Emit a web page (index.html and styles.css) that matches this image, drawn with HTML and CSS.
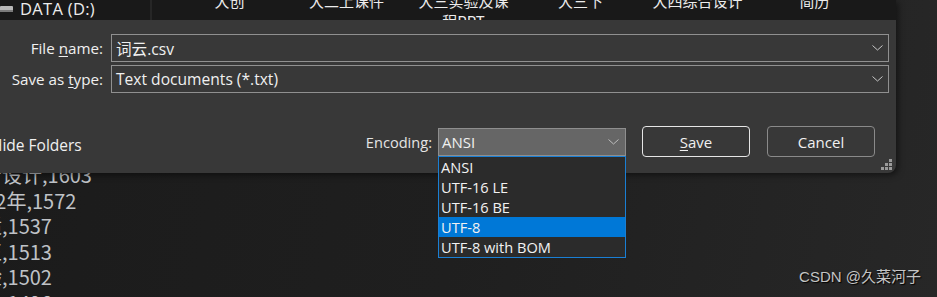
FILE: index.html
```html
<!DOCTYPE html>
<html lang="en">
<head>
    <meta charset="UTF-8">
    <title>Save As</title>
    <link rel="stylesheet" href="styles.css">
</head>
<body>
    <!-- Editor behind the dialog -->
    <div class="editor">
        <div class="line">综合设计,1603</div>
        <div class="line">2022年,1572</div>
        <div class="line">合适,1537</div>
        <div class="line">修正,1513</div>
        <div class="line">体验,1502</div>
        <div class="line">项目,1496</div>
    </div>

    <div class="watermark">CSDN @久菜河子</div>

    <!-- Save As dialog -->
    <div class="dialog">
        <div class="browser">
            <div class="nav">
                <svg class="drive" width="14" height="8" viewBox="0 0 14 8">
                    <rect x="0" y="1" width="13" height="6" rx="1" fill="#b8b8b8"/>
                    <rect x="0" y="5" width="13" height="2" fill="#7a7a7a"/>
                </svg>
                <span>DATA (D:)</span>
            </div>
            <div class="files">
                <div class="file">大创</div>
                <div class="file">大二上课件</div>
                <div class="file">大三实验及课程PPT</div>
                <div class="file">大三下</div>
                <div class="file">大四综合设计</div>
                <div class="file">简历</div>
            </div>
        </div>

        <div class="fields">
            <div class="field-row">
                <label class="field-label">File <u>n</u>ame:</label>
                <div class="combo">
                    <span>词云.csv</span>
                    <svg class="chevron" width="11" height="6" viewBox="0 0 11 6"><polyline points="0.5,0.5 5.5,5 10.5,0.5" fill="none" stroke="#c8c8c8" stroke-width="1"/></svg>
                </div>
            </div>
            <div class="field-row">
                <label class="field-label">Save as <u>t</u>ype:</label>
                <div class="combo">
                    <span>Text documents (*.txt)</span>
                    <svg class="chevron" width="11" height="6" viewBox="0 0 11 6"><polyline points="0.5,0.5 5.5,5 10.5,0.5" fill="none" stroke="#c8c8c8" stroke-width="1"/></svg>
                </div>
            </div>
        </div>

        <div class="footer">
            <div class="hide-folders">Hide Folders</div>
            <div class="encoding">
                <span class="encoding-label">Encoding:</span>
                <div class="select-wrap">
                    <div class="select">
                        <span>ANSI</span>
                        <svg class="chevron" width="11" height="6" viewBox="0 0 11 6"><polyline points="0.5,0.5 5.5,5 10.5,0.5" fill="none" stroke="#bdbdbd" stroke-width="1"/></svg>
                    </div>
                    <ul class="options">
                        <li>ANSI</li>
                        <li>UTF-16 LE</li>
                        <li>UTF-16 BE</li>
                        <li class="selected">UTF-8</li>
                        <li>UTF-8 with BOM</li>
                    </ul>
                </div>
            </div>
            <button class="btn btn-default"><u>S</u>ave</button>
            <button class="btn">Cancel</button>
        </div>

        <svg class="grip" width="12" height="12" viewBox="0 0 12 12">
            <rect x="8" y="0" width="3" height="3" fill="#9a9a9a"/>
            <rect x="4" y="4" width="3" height="3" fill="#9a9a9a"/>
            <rect x="8" y="4" width="3" height="3" fill="#9a9a9a"/>
            <rect x="0" y="8" width="3" height="3" fill="#9a9a9a"/>
            <rect x="4" y="8" width="3" height="3" fill="#9a9a9a"/>
            <rect x="8" y="8" width="3" height="3" fill="#9a9a9a"/>
        </svg>
    </div>
</body>
</html>
```

FILE: styles.css
```css
* {
    box-sizing: border-box;
    margin: 0;
    padding: 0;
}

body {
    width: 937px;
    height: 297px;
    overflow: hidden;
    position: relative;
    font-family: 'Open Sans', 'Noto Sans CJK SC', sans-serif;
    font-size: 15px;
    color: #f0f0f0;
    background: linear-gradient(100deg, #1b1b1b 0%, #1f1f1f 50%, #272727 100%);
}

/* editor text behind the dialog */
.editor {
    height: 297px;
    overflow: hidden;
    padding-top: 162px;
    margin-left: -38px;
    font-family: 'Noto Sans CJK SC', sans-serif;
    font-size: 20px;
    line-height: 25.6px;
    color: #bfc2c6;
}

.watermark {
    position: absolute;
    right: 16px;
    bottom: 11px;
    font-family: 'Liberation Sans', 'Noto Sans CJK SC', sans-serif;
    font-size: 15px;
    color: #c4c4c4;
    text-shadow: 1px 1px 1px #000;
}

/* dialog */
.dialog {
    position: absolute;
    top: 0;
    left: 0;
    width: 896px;
    height: 173px;
    background-color: #383838;
    border-bottom-right-radius: 8px;
    box-shadow: 2px 2px 6px rgba(0, 0, 0, 0.5);
}

.browser {
    display: flex;
    height: 20px;
    background-color: #191919;
    overflow: hidden;
}

.nav {
    width: 152px;
    display: flex;
    align-items: center;
    gap: 6px;
    padding-bottom: 3px;
    border-right: 2px solid #262626;
    font-size: 16.5px;
    letter-spacing: 0.3px;
    color: #ececec;
}

.drive {
    flex: none;
}

.files {
    display: flex;
    padding-left: 19px;
    margin-top: -9px;
}

.file {
    width: 117px;
    padding: 0 8px;
    font-family: 'Noto Sans CJK SC', sans-serif;
    font-size: 15px;
    line-height: 20px;
    text-align: center;
    color: #ececec;
}

.fields {
    display: flex;
    flex-direction: column;
    gap: 3px;
    padding: 14px 7px 0 0;
}

.field-row {
    display: flex;
    align-items: center;
    gap: 8px;
}

.field-label {
    width: 103px;
    text-align: right;
    font-size: 15.2px;
}

.field-label u,
.btn u {
    text-underline-offset: 2px;
}

.combo {
    flex: 1;
    height: 28px;
    display: flex;
    align-items: center;
    justify-content: space-between;
    padding: 0 5px 0 4px;
    border: 1px solid #909090;
    font-size: 15.6px;
}

.footer {
    display: flex;
    align-items: center;
    padding: 33px 21px 0 0;
}

.hide-folders {
    flex: 1;
    margin-left: -9px;
    margin-top: 6px;
    font-size: 15.5px;
}

.encoding {
    display: flex;
    align-items: center;
    gap: 6px;
}

.encoding-label {
    font-size: 14.6px;
    color: #e4e4e4;
}

.select-wrap {
    position: relative;
}

.select {
    width: 188px;
    height: 28px;
    display: flex;
    align-items: center;
    justify-content: space-between;
    padding: 0 6px 0 3px;
    background-color: #666666;
    border: 1px solid #8e8e8e;
}

.options {
    position: absolute;
    top: 28px;
    left: 0;
    width: 188px;
    list-style: none;
    background-color: #2b2b2b;
    border: 1px solid #1a7fd4;
    z-index: 5;
}

.options li {
    height: 20px;
    line-height: 20px;
    padding-left: 2px;
    font-size: 14.6px;
    color: #f2f2f2;
}

.options li.selected {
    background-color: #0078d7;
}

.btn {
    width: 108px;
    height: 31px;
    margin-left: 16px;
    border: 1px solid #8a8a8a;
    border-radius: 4px;
    background-color: #383838;
    color: #f0f0f0;
    font-family: 'Open Sans', sans-serif;
    font-size: 15px;
}

.btn + .btn {
    margin-left: 17px;
}

.btn-default {
    border-color: #e6e6e6;
}

.grip {
    position: absolute;
    right: 3px;
    bottom: 2px;
}
```
